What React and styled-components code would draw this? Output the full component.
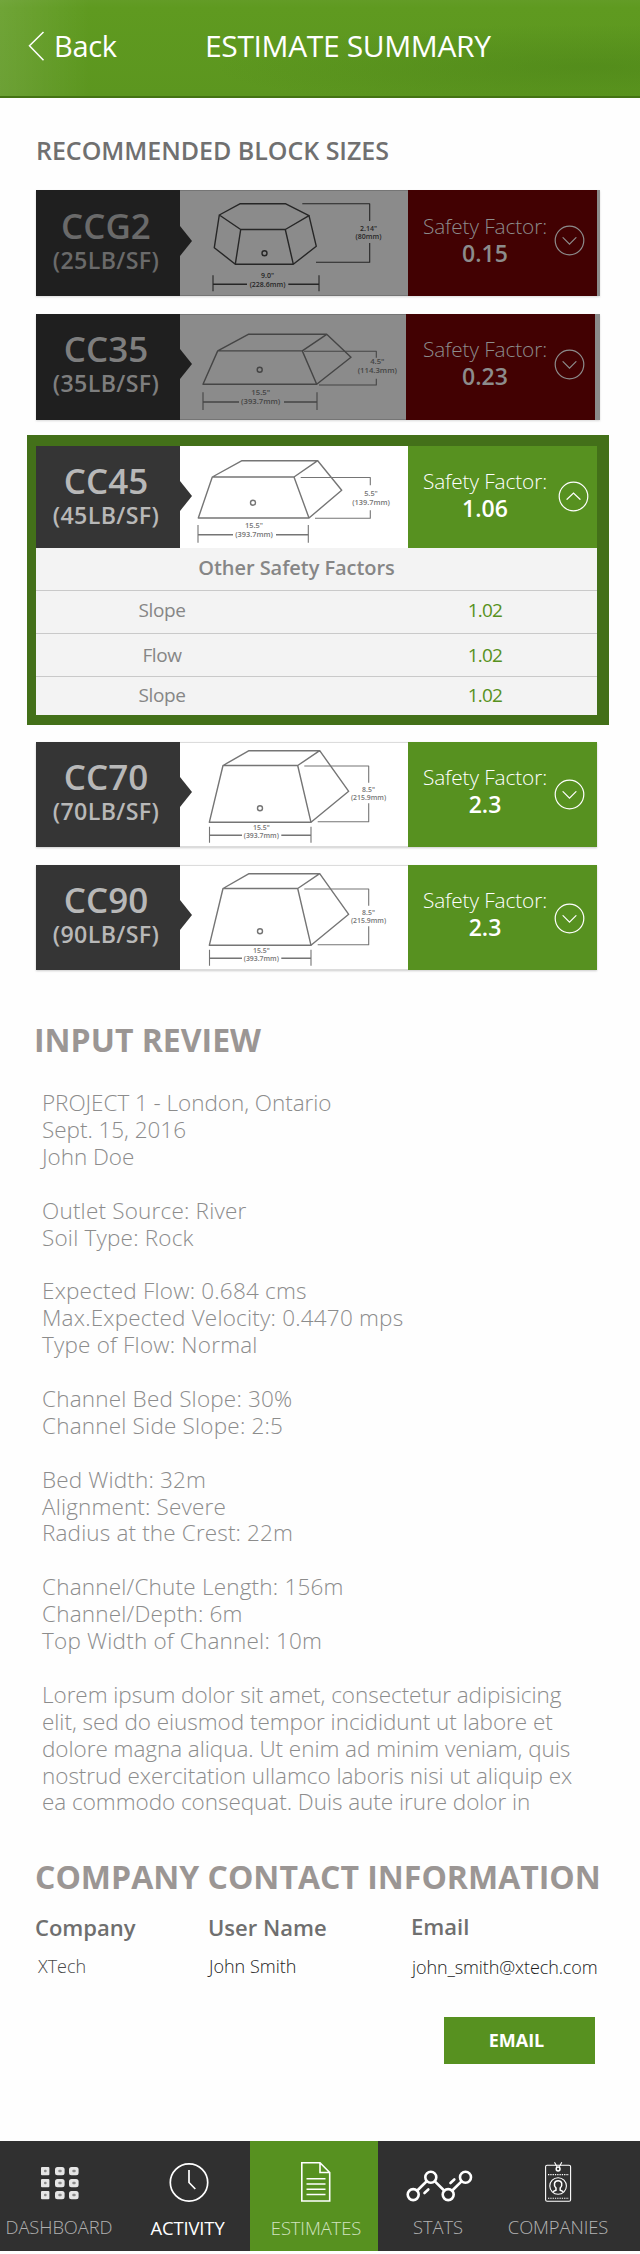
import React from "react";
import styled, { createGlobalStyle, css } from "styled-components";

const green = "#579120";

const GlobalStyle = createGlobalStyle`
  *, *::before, *::after { box-sizing: border-box; }
  body { margin: 0; background: #fff; }
`;

const Page = styled.div`
  width: 640px;
  height: 2254px;
  display: flex;
  flex-direction: column;
  overflow: hidden;
  background: #fefefe;
  font-family: "Open Sans", "Noto Sans", sans-serif;
`;

/* ---------- header ---------- */

const Header = styled.header`
  flex: none;
  height: 98px;
  padding: 0 0 5px 28px;
  display: flex;
  align-items: center;
  color: #fff;
  border-bottom: 2px solid #447313;
  background:
    linear-gradient(90deg, rgba(255, 255, 255, 0.1), rgba(255, 255, 255, 0) 14%),
    radial-gradient(ellipse at 92% 70%, rgba(72, 128, 22, 0.45), rgba(72, 128, 22, 0) 45%),
    linear-gradient(#639c26, #5f9a20 8%, #5c961f);
`;

const BackButton = styled.a`
  display: flex;
  align-items: center;
  gap: 9px;
  width: 177px;
  font-size: 29px;
  line-height: 36px;
  letter-spacing: -0.3px;
`;

const PageTitle = styled.h1`
  margin: 0;
  padding-top: 1px;
  font-size: 30px;
  font-weight: 400;
  line-height: 36px;
  letter-spacing: -0.37px;
  white-space: nowrap;
`;

/* ---------- block cards ---------- */

const Content = styled.main`
  flex: 1;
  display: flex;
  flex-direction: column;
`;

const ListHeading = styled.h2`
  margin: 37px 0 25px 36px;
  font-size: 25px;
  font-weight: 600;
  line-height: 30px;
  letter-spacing: -0.03px;
  color: #707070;
`;

const BlockList = styled.section`
  display: flex;
  flex-direction: column;
`;

const rowLook = {
  dim: css`
    width: 564px;
    height: 106px;
    background: #8b8b8b;
    border-color: #757575;
    box-shadow: 0 1px 2px rgba(0, 0, 0, 0.15);
  `,
  normal: css`
    width: 561px;
    height: 105px;
    background: #fff;
    border-color: #dcdcdc;
    box-shadow: 0 1px 2px rgba(0, 0, 0, 0.2);
  `,
  open: css`
    width: 561px;
    height: 102px;
    background: #fff;
    border-color: transparent;
  `,
};

const Row = styled.div`
  display: flex;
  margin: 0 0 ${(p) => p.$after ?? 0}px ${(p) => (p.$look === "open" ? 0 : 36)}px;
  ${(p) => rowLook[p.$look]}
`;

const Badge = styled.div`
  width: 144px;
  flex: none;
  padding: ${(p) => p.$top ?? 17}px 4px 0 0;
  position: relative;
  text-align: center;
  white-space: nowrap;
  font-weight: 600;
  background: ${(p) => p.$bg};
  color: ${(p) => p.$ink};
  &::after {
    content: "";
    position: absolute;
    left: 100%;
    top: ${(p) => (p.$top ?? 17) + 18}px;
    border: solid transparent;
    border-width: 15px 0 15px 12px;
    border-left-color: ${(p) => p.$bg};
  }
`;

const BadgeName = styled.div`
  font-size: 35px;
  line-height: 36px;
`;

const BadgeWeight = styled.div`
  margin-top: 2px;
  font-size: 23.2px;
  line-height: 28px;
  letter-spacing: 0.35px;
`;

const Drawing = styled.svg`
  flex: none;
  width: ${(p) => p.$w}px;
  height: 100%;
  display: block;
  border-style: solid;
  border-width: 1px 0;
  border-color: inherit;
  fill: none;
  stroke: ${(p) => p.$ink};
  stroke-width: 1.4;
  stroke-linejoin: round;
  text {
    font-family: "Open Sans", sans-serif;
    font-weight: 600;
    fill: ${(p) => p.$ink};
    stroke: none;
    text-anchor: middle;
  }
`;

const Safety = styled.div`
  flex: none;
  width: 189px;
  display: flex;
  padding-left: ${(p) => p.$left ?? 16}px;
  background: ${(p) => (p.$dim ? "#420102" : green)};
  color: ${(p) => (p.$dim ? "#8c8c8c" : "#fff")};
`;

const SafetyText = styled.div`
  width: 122px;
  padding-top: ${(p) => p.$top ?? 22}px;
  display: flex;
  flex-direction: column;
  align-items: center;
  white-space: nowrap;
`;

const SafetyLabel = styled.span`
  font-size: 20.8px;
  font-weight: 300;
  line-height: 26px;
  letter-spacing: -0.1px;
`;

const SafetyValue = styled.span`
  font-size: 23px;
  font-weight: 600;
  line-height: 28px;
`;

const Toggle = styled.svg`
  margin: ${(p) => p.$top}px 0 0 ${(p) => p.$left ?? 7.5}px;
  width: 31px;
  height: 31px;
  fill: none;
  stroke: currentColor;
  stroke-width: 1.2;
  stroke-linecap: round;
`;

const OpenCard = styled.div`
  width: 582px;
  height: 290px;
  margin: 0 0 17px 27px;
  padding: 11px 12px 10px 9px;
  background: #437019;
`;

const FactorTable = styled.div`
  height: 167px;
  width: 561px;
  background: #f3f3f3;
  color: #868686;
`;

const FactorTitle = styled.div`
  height: 42px;
  padding: 5px 44px 0 4px;
  text-align: center;
  font-size: 20px;
  font-weight: 600;
  line-height: 30px;
  letter-spacing: -0.05px;
`;

const FactorRow = styled.div`
  display: grid;
  grid-template-columns: 252px 394px;
  height: ${(p) => p.$h}px;
  padding-top: ${(p) => p.$top}px;
  border-top: 1px solid #c9c9c9;
  text-align: center;
  font-size: 19px;
  line-height: 28px;
  letter-spacing: -0.4px;
  overflow: hidden;
`;

const FactorValue = styled.span`
  color: ${green};
  letter-spacing: -0.8px;
`;

/* ---------- review and contact ---------- */

const SectionHeading = styled.h2`
  margin: ${(p) => p.$before}px 0 0 ${(p) => p.$left}px;
  font-size: 32px;
  font-weight: 700;
  line-height: 40px;
  letter-spacing: 0;
  white-space: nowrap;
  color: #9b9694;
`;

const Review = styled.div`
  margin: 30px 0 0 42px;
  height: 725px;
  font-size: 22.5px;
  font-weight: 300;
  line-height: 26.9px;
  color: #8c8c8c;
`;

const ReviewGroup = styled.div`
  margin-bottom: 26.9px;
  letter-spacing: ${(p) => p.$track}px;
`;

const ReviewLine = styled.div`
  white-space: nowrap;
`;

const Contact = styled.div`
  display: grid;
  grid-template-columns: 173px 203px 1fr;
  margin: 16px 0 0 35px;
  height: 104px;
`;

const ContactField = styled.div`
  display: flex;
  flex-direction: column;
  white-space: nowrap;
`;

const ContactLabel = styled.span`
  font-size: 22px;
  font-weight: 600;
  line-height: 28px;
  margin-top: ${(p) => p.$top ?? 0}px;
  color: #6f6f6f;
`;

const ContactValue = styled.span`
  margin-top: ${(p) => p.$top ?? 13}px;
  padding-left: ${(p) => p.$left ?? 0}px;
  font-size: 18px;
  font-weight: 300;
  line-height: 24px;
  letter-spacing: ${(p) => p.$track ?? 0}px;
  color: ${(p) => p.$ink ?? "#1c1c1c"};
`;

const EmailButton = styled.button`
  margin-left: 444px;
  width: 151px;
  height: 47px;
  padding: 0 6px 1px 0;
  border: 0;
  background: ${green};
  color: #fff;
  font: 700 18px/24px "Open Sans", sans-serif;
`;

/* ---------- tab bar ---------- */

const TabBar = styled.nav`
  flex: none;
  height: 110px;
  margin-bottom: 3px;
  display: grid;
  grid-template-columns: 118px 132px 128px 120px 142px;
  background: #303030;
`;

const Tab = styled.div`
  display: flex;
  flex-direction: column;
  align-items: center;
  padding: 19px ${(p) => p.$right ?? 0}px 0 ${(p) => p.$left ?? 0}px;
  background: ${(p) => (p.$active ? green : "transparent")};
`;

const TabIcon = styled.svg`
  width: 70px;
  height: 44px;
  fill: none;
  stroke: #fff;
`;

const TabLabel = styled.span`
  margin-top: ${(p) => p.$top ?? 11}px;
  font-size: 18.4px;
  font-weight: ${(p) => p.$weight ?? 300};
  line-height: 24px;
  letter-spacing: -0.1px;
  white-space: nowrap;
  color: ${(p) => p.$ink ?? "#b4b4b4"};
`;

/* ---------- block drawings ---------- */

function Dimensions({ bottom, side, size, lower, upper }) {
  const { x1, x2, g1, g2, y, y1, y2, tx, t1, t2 } = bottom;
  const s = side;
  return (
    <>
      <path strokeWidth="1.1" d={`M${x1} ${y1}V${y2}M${x2} ${y1}V${y2}`} />
      <path d={`M${x1} ${y}H${g1}M${g2} ${y}H${x2}`} />
      <path strokeWidth="1.1" d={`M${s.l1} ${s.y1}H${s.x}V${s.g1}M${s.x} ${s.g2}V${s.y2}H${s.l2}`} />
      <text x={tx} y={t1} fontSize={size}>{lower[0]}</text>
      <text x={tx} y={t2} fontSize={size}>{lower[1]}</text>
      <text x={s.tx} y={s.t1} fontSize={size}>{upper[0]}</text>
      <text x={s.tx} y={s.t2} fontSize={size}>{upper[1]}</text>
    </>
  );
}

const shapes = {
  hex: {
    lines:
      "M60.3 13.7H105.3L129 25.7L105.3 39.5H60.7L39.3 25ZM39.3 25L34.3 57.7L55.3 74.2H113.3L136.3 56.3L129 25.7M60.7 39.5L55.3 74.2M105.3 39.5L113.3 74.2",
    hole: [84.5, 63.3],
    dims: {
      bottom: { x1: 33, x2: 139, g1: 67, g2: 108.3, y: 94.3, y1: 85.3, y2: 101.3, tx: 87.5, t1: 87.7, t2: 97 },
      side: { l1: 122.3, l2: 136, y1: 13.7, y2: 72.3, x: 189.7, g1: 31, g2: 53, tx: 188.5, t1: 41.3, t2: 49.2 },
      size: 7,
      lower: ['9.0"', "(228.6mm)"],
      upper: ['2.14"', "(80mm)"],
    },
  },
  low: {
    lines: "M23 70.3L37.7 36.9H122.3L136.7 70.3ZM37.7 36.9L68.3 20.3H146.7L122.3 36.9M146.7 20.3L171 43.3L136.7 70.3",
    hole: [79.7, 55.7],
    dims: {
      bottom: { x1: 23, x2: 137, g1: 59, g2: 104, y: 88, y1: 78.3, y2: 96, tx: 80.7, t1: 81.3, t2: 90.3 },
      side: { l1: 124, l2: 139, y1: 37.3, y2: 71, x: 196.3, g1: 43.7, g2: 64.7, tx: 197.3, t1: 50.3, t2: 59.3 },
      size: 7.7,
      lower: ['15.5"', "(393.7mm)"],
      upper: ['4.5"', "(114.3mm)"],
    },
  },
  mid: {
    lines: "M18.3 72L32.3 31H114L129 72ZM32.3 31L62 14.7H137.7L114 31M137.7 14.7L161.7 44.3L129 72",
    hole: [73, 56.7],
    dims: {
      bottom: { x1: 18, x2: 128.3, g1: 53, g2: 96, y: 88.7, y1: 79, y2: 96.7, tx: 74, t1: 82.3, t2: 91 },
      side: { l1: 120.7, l2: 135, y1: 31.5, y2: 72.3, x: 190.3, g1: 39.3, g2: 64.3, tx: 191, t1: 50, t2: 58.7 },
      size: 7.4,
      lower: ['15.5"', "(393.7mm)"],
      upper: ['5.5"', "(139.7mm)"],
    },
  },
  tall: {
    lines: "M29.3 80.3L43 23.5H117.7L131 80.3ZM43 23.5L69 8.7H139.7L117.7 23.5M139.7 8.7L168.7 49.3L131 80.3",
    hole: [80, 66.3],
    dims: {
      bottom: { x1: 29.5, x2: 131, g1: 62, g2: 101.3, y: 93.3, y1: 84.7, y2: 100.7, tx: 81.3, t1: 88, t2: 96.2 },
      side: { l1: 124.3, l2: 137.7, y1: 24, y2: 79.7, x: 188.7, g1: 40.7, g2: 61.3, tx: 188.5, t1: 50, t2: 58 },
      size: 6.9,
      lower: ['15.5"', "(393.7mm)"],
      upper: ['8.5"', "(215.9mm)"],
    },
  },
};

function BlockDrawing({ shape, ink, width, height }) {
  const s = shapes[shape];
  return (
    <Drawing $w={width} $ink={ink} viewBox={`0 1 ${width} ${height - 2}`}>
      <path d={s.lines} />
      <circle cx={s.hole[0]} cy={s.hole[1]} r="2.5" />
      <Dimensions {...s.dims} />
    </Drawing>
  );
}

const rowHeight = { dim: 106, normal: 105, open: 102 };

function BlockRow({ look, name, weight, badgeTop, badgeInk, shape, lineInk, value, drawW = 228, left, textTop, toggleTop, toggleLeft, after }) {
  const dim = look === "dim";
  return (
    <Row $look={look} $after={after}>
      <Badge $top={badgeTop} $bg={dim ? "#1f1f1f" : "#353535"} $ink={badgeInk ?? "#b8b8b8"}>
        <BadgeName>{name}</BadgeName>
        <BadgeWeight>{weight}</BadgeWeight>
      </Badge>
      <BlockDrawing shape={shape} ink={lineInk ?? "#757575"} width={drawW} height={rowHeight[look]} />
      <Safety $dim={dim} $left={left}>
        <SafetyText $top={textTop}>
          <SafetyLabel>Safety Factor:</SafetyLabel>
          <SafetyValue>{value}</SafetyValue>
        </SafetyText>
        <Toggle $top={toggleTop} $left={toggleLeft} viewBox="0 0 31 31">
          <circle cx="15.5" cy="15.5" r="14.3" />
          <path d={look === "open" ? "M9 18.3L15.5 12L22 18.3" : "M9 12.7L15.5 19.2L22 12.7"} />
        </Toggle>
      </Safety>
    </Row>
  );
}

/* ---------- tab icons ---------- */

function GridIcon() {
  const cells = [0, 1, 2].flatMap((r) => [0, 1, 2].map((c) => [c, r]));
  return (
    <TabIcon viewBox="0 0 70 44">
      {cells.map(([c, r]) => (
        <g key={`${c}${r}`} stroke="none">
          <rect x={17 + c * 14} y={7 + r * 12} width={c ? 9.6 : 8.4} height="8.2" rx={c ? 2.5 : 1} fill="#e6e6e6" />
          <rect x={(c ? 20.3 : 20) + c * 14} y={9.8 + r * 12} width={c ? 3.4 : 2.6} height="2.4" rx="1" fill="#8a8a8a" />
        </g>
      ))}
    </TabIcon>
  );
}

function ClockIcon() {
  return (
    <TabIcon viewBox="0 0 70 44" strokeWidth="1.7">
      <circle cx="36" cy="22.5" r="18.7" />
      <path d="M36 10V22.5L42.3 29" />
    </TabIcon>
  );
}

function DocumentIcon() {
  return (
    <TabIcon viewBox="0 0 70 44" strokeWidth="1.6">
      <path d="M20.8 2.8H39L48.7 12.5V41H20.8ZM39 2.8V12.5H48.7" />
      <path d="M25.5 18.8H44.5M25.5 24H44.5M25.5 29.3H44.5M25.5 34.6H44.5" strokeWidth="1.5" />
    </TabIcon>
  );
}

function StatsIcon() {
  return (
    <TabIcon viewBox="0.5 0 70 44" stroke="#e9e9e9" strokeWidth="2.6" strokeLinecap="round">
      <circle cx="10.7" cy="34.6" r="5.5" />
      <circle cx="28.3" cy="17.2" r="5.5" />
      <circle cx="45.7" cy="34.6" r="5.5" />
      <circle cx="63" cy="17.2" r="5.5" />
      <path d="M14.8 30.5L24.2 21.3M32.4 21.3L41.6 30.5M49.8 30.5L59 21.3" />
      <path d="M22 33L25.8 29.5M48 23L51.8 19.5" />
    </TabIcon>
  );
}

function BadgeIcon() {
  return (
    <TabIcon viewBox="0 0 70 44" stroke="#e6e6e6" strokeWidth="1.1">
      <rect x="22.6" y="5.3" width="25" height="36" rx="1.5" />
      <path d="M31.5 2.3L34 6.8M38.8 2.3L36.3 6.8" />
      <circle cx="35.1" cy="9" r="1.9" strokeWidth="1.5" />
      <path d="M25 14.6H46M25 38.2H46" strokeDasharray="1.3 1" />
      <circle cx="35.1" cy="26" r="8.3" />
      <path d="M29.8 31.6L33 30.2V28C30.3 24.8 31 20.8 35.1 20.8S39.9 24.8 37.2 28V30.2L40.4 31.6" strokeWidth="1.5" />
    </TabIcon>
  );
}

/* ---------- data ---------- */

const review = [
  { track: -0.04, lines: ["PROJECT 1 - London, Ontario", "Sept. 15, 2016", "John Doe"] },
  { track: 0.2, lines: ["Outlet Source: River", "Soil Type: Rock"] },
  { track: 0.2, lines: ["Expected Flow: 0.684 cms", "Max.Expected Velocity: 0.4470 mps", "Type of Flow: Normal"] },
  { track: 0.2, lines: ["Channel Bed Slope: 30%", "Channel Side Slope: 2:5"] },
  { track: 0.15, lines: ["Bed Width: 32m", "Alignment: Severe", "Radius at the Crest: 22m"] },
  { track: 0.2, lines: ["Channel/Chute Length: 156m", "Channel/Depth: 6m", "Top Width of Channel: 10m"] },
  {
    track: -0.04,
    lines: [
      "Lorem ipsum dolor sit amet, consectetur adipisicing",
      "elit, sed do eiusmod tempor incididunt ut labore et",
      "dolore magna aliqua. Ut enim ad minim veniam, quis",
      "nostrud exercitation ullamco laboris nisi ut aliquip ex",
      "ea commodo consequat. Duis aute irure dolor in",
    ],
  },
];

export default function App() {
  return (
    <Page>
      <GlobalStyle />
      <Header>
        <BackButton>
          <svg width="17" height="32" viewBox="0 0 17 32" fill="none" stroke="#fff" strokeWidth="1.5">
            <path d="M15.5 2L1.5 15.7L15.5 30.3" />
          </svg>
          Back
        </BackButton>
        <PageTitle>ESTIMATE SUMMARY</PageTitle>
      </Header>

      <Content>
        <ListHeading>RECOMMENDED BLOCK SIZES</ListHeading>
        <BlockList>
          <BlockRow look="dim" name="CCG2" weight="(25LB/SF)" badgeTop={18} badgeInk="#6a6a6a" shape="hex" lineInk="#262626" value="0.15" textTop={23} toggleTop={34.5} after={18} />
          <BlockRow look="dim" name="CC35" weight="(35LB/SF)" badgeInk="#7e7e7e" shape="low" lineInk="#454545" value="0.23" drawW={226} left={18} toggleTop={34.5} after={15} />
          <OpenCard>
            <BlockRow look="open" name="CC45" weight="(45LB/SF)" shape="mid" value="1.06" toggleTop={34.5} toggleLeft={12} />
            <FactorTable>
              <FactorTitle>Other Safety Factors</FactorTitle>
              <FactorRow $h={43} $top={5}>
                <span>Slope</span>
                <FactorValue>1.02</FactorValue>
              </FactorRow>
              <FactorRow $h={43} $top={7}>
                <span>Flow</span>
                <FactorValue>1.02</FactorValue>
              </FactorRow>
              <FactorRow $h={39} $top={4}>
                <span>Slope</span>
                <FactorValue>1.02</FactorValue>
              </FactorRow>
            </FactorTable>
          </OpenCard>
          <BlockRow look="normal" name="CC70" weight="(70LB/SF)" shape="tall" value="2.3" toggleTop={36.5} after={18} />
          <BlockRow look="normal" name="CC90" weight="(90LB/SF)" shape="tall" value="2.3" toggleTop={37.5} />
        </BlockList>

        <SectionHeading $before={50} $left={34}>INPUT REVIEW</SectionHeading>
        <Review>
          {review.map((group) => (
            <ReviewGroup key={group.lines[0]} $track={group.track}>
              {group.lines.map((line) => (
                <ReviewLine key={line}>{line}</ReviewLine>
              ))}
            </ReviewGroup>
          ))}
        </Review>

        <SectionHeading $before={42} $left={35}>COMPANY CONTACT INFORMATION</SectionHeading>
        <Contact>
          <ContactField>
            <ContactLabel>Company</ContactLabel>
            <ContactValue $left={3} $ink="#4a4a4a">XTech</ContactValue>
          </ContactField>
          <ContactField>
            <ContactLabel>User Name</ContactLabel>
            <ContactValue $left={1}>John Smith</ContactValue>
          </ContactField>
          <ContactField>
            <ContactLabel $top={-1}>Email</ContactLabel>
            <ContactValue $top={15} $left={1} $track={-0.1}>john_smith@xtech.com</ContactValue>
          </ContactField>
        </Contact>
        <EmailButton>EMAIL</EmailButton>
      </Content>

      <TabBar>
        <Tab>
          <GridIcon />
          <TabLabel $ink="#b0b0b0">DASHBOARD</TabLabel>
        </Tab>
        <Tab $left={8} $right={1}>
          <ClockIcon />
          <TabLabel $top={12} $weight={400} $ink="#fff">ACTIVITY</TabLabel>
        </Tab>
        <Tab $active $left={4}>
          <DocumentIcon />
          <TabLabel $top={12} $ink="#d2e3c0">ESTIMATES</TabLabel>
        </Tab>
        <Tab>
          <StatsIcon />
          <TabLabel>STATS</TabLabel>
        </Tab>
        <Tab $right={22}>
          <BadgeIcon />
          <TabLabel>COMPANIES</TabLabel>
        </Tab>
      </TabBar>
    </Page>
  );
}
